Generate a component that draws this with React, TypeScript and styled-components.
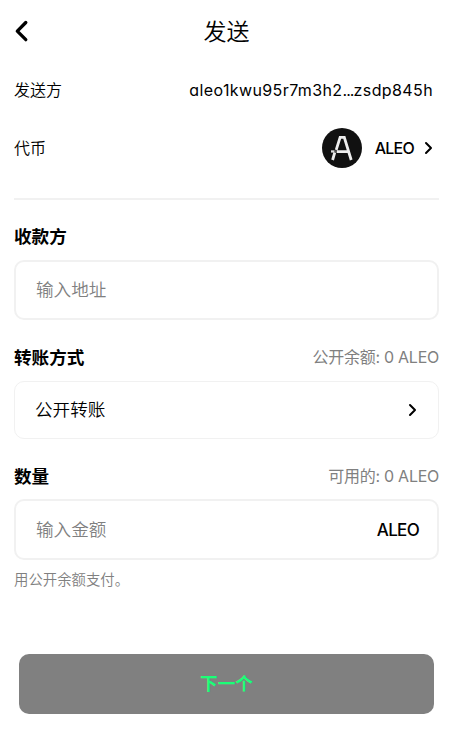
import React from "react";
import styled, { createGlobalStyle } from "styled-components";

const GlobalStyle = createGlobalStyle`
  * { box-sizing: border-box; }
  body {
    margin: 0;
    background: #fff;
    color: #000;
    font-family: Inter, "Noto Sans CJK SC", sans-serif;
    font-feature-settings: "cv11" 1;
  }
`;

const Screen = styled.main`
  height: 736px;
  padding: 0 17px 0 14px;
  display: flex;
  flex-direction: column;
`;

const Header = styled.header`
  height: 62px;
  flex: none;
  display: grid;
  grid-template-columns: 28px 1fr 28px;
  align-items: center;
`;

const Title = styled.h1`
  margin: 0;
  padding-top: 2px;
  text-align: center;
  font-size: 23px;
  line-height: 30px;
  font-weight: 350;
`;

const IconButton = styled.button`
  padding: 0;
  border: 0;
  background: none;
  display: flex;
`;

const InfoRow = styled.div<{ $height: number }>`
  height: ${(p) => p.$height}px;
  flex: none;
  display: flex;
  align-items: center;
  justify-content: space-between;
  font-size: 16px;
  font-weight: 350;
`;

const RowLabel = styled.span`
  padding-bottom: 2px;
`;

const Address = styled.span`
  margin-right: 6px;
  letter-spacing: 0.39px;
  font-weight: 400;
`;

const Dots = styled.span`
  letter-spacing: -0.9px;
`;

const Token = styled.div`
  display: flex;
  align-items: center;
  margin-right: 5px;
`;

const Symbol = styled.span<{ $size: number; $spacing: number }>`
  font-size: ${(p) => p.$size}px;
  letter-spacing: ${(p) => p.$spacing}px;
  font-weight: 500;
`;

const TokenName = styled(Symbol)`
  margin: 0 9px 0 13px;
`;

const Divider = styled.hr`
  width: 100%;
  height: 2px;
  flex: none;
  margin: 21px 0 22px;
  border: 0;
  background: #f1f1f1;
`;

const FieldHead = styled.div<{ $gap: number }>`
  height: 30px;
  flex: none;
  margin-bottom: ${(p) => p.$gap}px;
  display: flex;
  align-items: center;
  justify-content: space-between;
`;

const Label = styled.h2<{ $drop?: number }>`
  margin: 0;
  padding-top: ${(p) => p.$drop ?? 0}px;
  font-size: 17.6px;
  line-height: 26px;
  font-weight: 700;
`;

const Balance = styled.span`
  color: #808080;
  font-size: 16px;
  line-height: 24px;
  font-weight: 400;
  letter-spacing: -0.26px;
`;

const Field = styled.div<{ $height: number; $border: number; $right: number; $after: number }>`
  height: ${(p) => p.$height}px;
  flex: none;
  margin-bottom: ${(p) => p.$after}px;
  padding: 0 ${(p) => p.$right}px 0 ${(p) => 21 - p.$border}px;
  border: ${(p) => p.$border}px solid #f1f1f1;
  border-radius: 10px;
  display: flex;
  align-items: center;
  justify-content: space-between;
  font-size: 17.6px;
  font-weight: 350;
`;

const Choice = styled.span`
  padding-bottom: 3px;
`;

const Input = styled.input`
  flex: 1;
  min-width: 0;
  padding: 0 0 1px 1px;
  border: 0;
  outline: 0;
  background: none;
  font: inherit;
  &::placeholder { color: #808080; opacity: 1; }
`;

const Note = styled.p`
  margin: 0 0 63px;
  height: 22px;
  flex: none;
  color: #808080;
  font-size: 14.4px;
  line-height: 22px;
  font-weight: 350;
`;

const NextButton = styled.button`
  height: 60px;
  flex: none;
  margin: 0 5px;
  padding: 0 0 4px;
  border: 0;
  border-radius: 10px;
  background: #808080;
  color: #1aff77;
  font-family: inherit;
  font-size: 17.6px;
  font-weight: 700;
`;

const Chevron = () => (
  <svg width="11" height="14" viewBox="0 0 11 14" fill="none" stroke="#000" strokeWidth="2" strokeLinecap="round" strokeLinejoin="round">
    <path d="M3 2l5 5-5 5" />
  </svg>
);

const AleoLogo = () => (
  <svg width="40" height="40" viewBox="0 0 40 40">
    <circle cx="20" cy="20" r="20" fill="#111" />
    <path d="M10.6 32 12.8 24.4M14.2 21.8 18.1 9.4H22.3L29.2 32M14.6 23.6H26.5" fill="none" stroke="#eee" strokeWidth="2.8" />
    <path d="M9 22.3h3.6v2.3H9z" fill="#ddd" />
    <path d="M12.6 22.3h2v2.3h-2z" fill="#555" />
  </svg>
);

export default function App() {
  return (
    <>
      <GlobalStyle />
      <Screen>
        <Header>
          <IconButton aria-label="返回">
            <svg width="16" height="24" viewBox="0 0 16 24" fill="none" stroke="#000" strokeWidth="3.3" strokeLinecap="round" strokeLinejoin="round">
              <path d="M11.8 3.5 3.3 12.2 11.8 20.7" />
            </svg>
          </IconButton>
          <Title>发送</Title>
        </Header>
        <InfoRow $height={56}>
          <RowLabel>发送方</RowLabel>
          <Address>aleo1kwu95r7m3h2<Dots>...</Dots>zsdp845h</Address>
        </InfoRow>
        <InfoRow $height={59}>
          <RowLabel>代币</RowLabel>
          <Token>
            <AleoLogo />
            <TokenName $size={16} $spacing={-0.75}>ALEO</TokenName>
            <Chevron />
          </Token>
        </InfoRow>
        <Divider />
        <FieldHead $gap={8}>
          <Label>收款方</Label>
        </FieldHead>
        <Field $height={60} $border={2} $right={19} $after={22}>
          <Input placeholder="输入地址" />
        </Field>
        <FieldHead $gap={9}>
          <Label $drop={2}>转账方式</Label>
          <Balance>公开余额: 0 ALEO</Balance>
        </FieldHead>
        <Field $height={58} $border={1} $right={20} $after={22}>
          <Choice>公开转账</Choice>
          <Chevron />
        </Field>
        <FieldHead $gap={8}>
          <Label $drop={1}>数量</Label>
          <Balance>可用的: 0 ALEO</Balance>
        </FieldHead>
        <Field $height={61} $border={2} $right={18} $after={9}>
          <Input placeholder="输入金额" />
          <Symbol $size={17} $spacing={-0.7}>ALEO</Symbol>
        </Field>
        <Note>用公开余额支付。</Note>
        <NextButton>下一个</NextButton>
      </Screen>
    </>
  );
}
